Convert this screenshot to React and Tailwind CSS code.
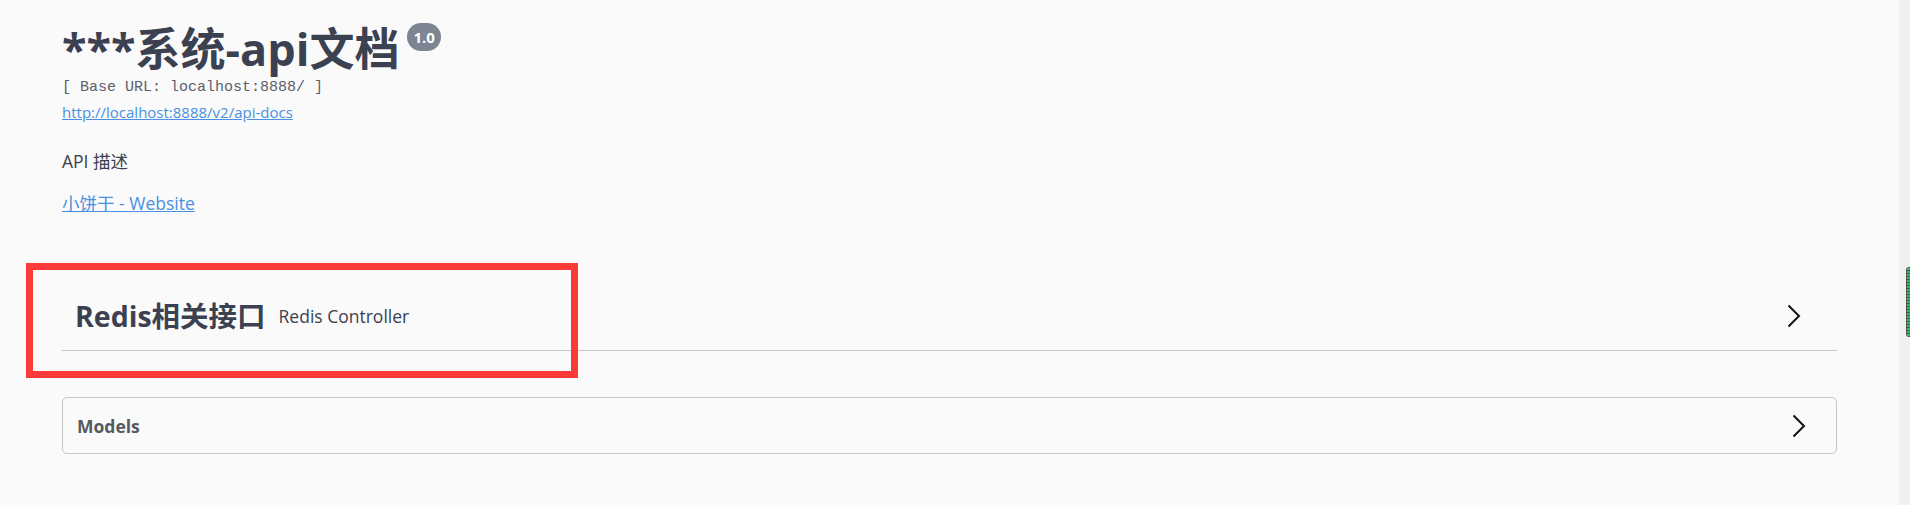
import React from "react";

function Chevron() {
  return (
    <svg width="14" height="24" viewBox="0 0 14 24" fill="none">
      <path d="M1.5 1.5 L12 12 L1.5 22.5" stroke="#111" strokeWidth="2" />
    </svg>
  );
}

export default function App() {
  return (
    <div className="relative flex min-h-[505px] w-full bg-[#fafafa] font-['Open_Sans','Noto_Sans_CJK_SC',sans-serif] text-[#3b4151]">
      <div className="w-[1899px] pl-[62px] pt-[22px]">
        <div className="w-[1775px]">
          {/* Info */}

          <div className="flex items-start">
            <h2 className="text-[45px] leading-[54px] font-bold text-[#3b4151]">
              ***系统-api文档
            </h2>
            <span className="ml-[8px] mt-[1px] h-[28px] rounded-full bg-[#7d8492] px-[6px] text-[15px] font-bold leading-[28px] text-white">
              1.0
            </span>
          </div>

          <div className="mt-[3px] font-['Liberation_Mono',monospace] text-[15px] leading-[18px] text-[#5a5f6b]">
            [ Base URL: localhost:8888/ ]
          </div>

          <a className="mt-[5px] block w-fit text-[15px] leading-[20px] text-[#4990e2] underline">
            http://localhost:8888/v2/api-docs
          </a>

          <p className="mt-[27px] text-[17.5px] leading-[24px]">API 描述</p>

          <a className="mt-[18px] block w-fit text-[17.5px] leading-[24px] text-[#4990e2] underline">
            小饼干 - Website
          </a>

          {/* Tag */}

          <div className="mt-[66px] flex h-[70px] items-center justify-between border-b border-[#c4c6cb] pl-[13px] pr-[36px]">
            <div className="flex items-center">
              <h3 className="text-[28.5px] font-bold leading-[40px] text-[#3b4151]">
                Redis相关接口
              </h3>
              <span className="ml-[13px] text-[17.5px] leading-[24px]">
                Redis Controller
              </span>
            </div>
            <Chevron />
          </div>

          {/* Models */}

          <div className="mt-[46px] flex h-[57px] items-center justify-between rounded-[5px] border border-[#c4c6cb] pl-[14px] pr-[30px]">
            <h4 className="text-[17.5px] font-bold leading-[26px] text-[#555a60]">
              Models
            </h4>
            <Chevron />
          </div>
        </div>
      </div>

      <div className="w-[11px] bg-[#f0f0f0]" />

      {/* annotation box */}
      <div className="absolute left-[26px] top-[263px] h-[115px] w-[552px] border-[7px] border-[#fc3a3a]" />

      {/* side widget */}
      <div className="absolute left-[1906px] top-[267px] h-[70px] w-[6px] rounded-l-[3px] bg-[#555] p-[1px]">
        <div className="h-full w-full bg-[repeating-linear-gradient(#22c55e_0px,#22c55e_2px,#555_2px,#555_3px)]" />
      </div>
    </div>
  );
}
